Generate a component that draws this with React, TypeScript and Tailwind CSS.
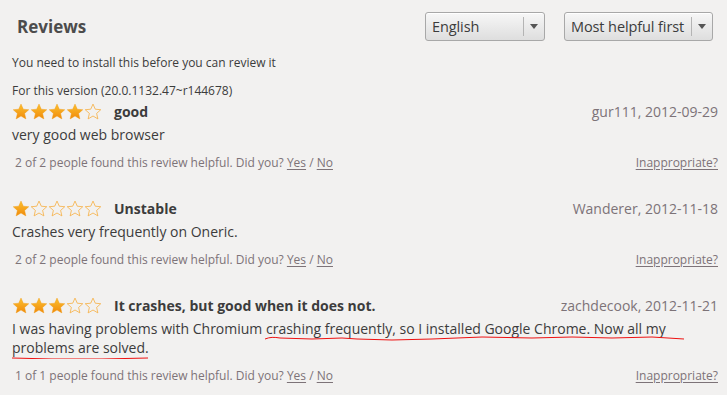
import React from 'react';

type Review = {
  rating: number;
  title: string;
  author: string;
  date: string;
  body: React.ReactNode;
  helpful: string;
};

function Star({ filled }: { filled: boolean }) {
  return (
    <svg width="18" height="17" viewBox="0 0 24 23" className="shrink-0">
      <defs>
        <linearGradient id="starFill" x1="0" y1="0" x2="0" y2="1">
          <stop offset="0" stopColor="#fcc12e" />
          <stop offset="1" stopColor="#f08a0c" />
        </linearGradient>
      </defs>
      <path
        d="M12 1.5l3.1 6.9 7.4.7-5.6 5 1.7 7.4L12 17.6l-6.6 3.9 1.7-7.4-5.6-5 7.4-.7z"
        fill={filled ? 'url(#starFill)' : 'none'}
        stroke={filled ? '#f29b12' : '#f7a934'}
        strokeWidth={filled ? 0.6 : 1}
        strokeLinejoin="miter"
      />
    </svg>
  );
}

function Stars({ rating }: { rating: number }) {
  return (
    <div className="flex items-center">
      {[0, 1, 2, 3, 4].map((i) => (
        <Star key={i} filled={i < rating} />
      ))}
    </div>
  );
}

function Dropdown({ label, width }: { label: string; width: string }) {
  return (
    <div
      className={`${width} h-[29px] flex items-stretch rounded-[3px] border border-[#a8a8a8] bg-gradient-to-b from-[#f7f7f7] to-[#dedede] shadow-[inset_0_1px_0_#ffffff]`}
    >
      <span className="flex-1 flex items-center pl-[6px] text-[14.5px] tracking-[-0.1px] text-[#3c3c3c] whitespace-nowrap">
        {label}
      </span>
      <span className="w-px my-[4px] bg-[#b4b4b4]" />
      <span className="w-[20px] flex items-center justify-center">
        <svg width="8" height="5" viewBox="0 0 8 5">
          <path d="M0 0h8L4 5z" fill="#555" />
        </svg>
      </span>
    </div>
  );
}

function ReviewItem({ r }: { r: Review }) {
  return (
    <div className="flex flex-col">
      <div className="flex items-center justify-between h-[20px]">
        <div className="flex items-center">
          <Stars rating={r.rating} />
          <span className="ml-[12px] text-[14px] font-bold text-[#3c3c3c]">{r.title}</span>
        </div>
        <span className="text-[14px] text-[#7d7378]">
          {r.author}, {r.date}
        </span>
      </div>
      <div className="text-[14px] leading-[19px] text-[#3c3c3c] mt-[4px]">{r.body}</div>
      <div className="flex items-center justify-between mt-[10px] text-[12px] text-[#7d7378]">
        <span className="pl-[3px]">
          {r.helpful} Did you? <span className="underline underline-offset-2">Yes</span> /{' '}
          <span className="underline underline-offset-2">No</span>
        </span>
        <span className="underline underline-offset-2">Inappropriate?</span>
      </div>
    </div>
  );
}

export default function App() {
  const reviews: Review[] = [
    {
      rating: 4,
      title: 'good',
      author: 'gur111',
      date: '2012-09-29',
      body: 'very good web browser',
      helpful: '2 of 2 people found this review helpful.',
    },
    {
      rating: 1,
      title: 'Unstable',
      author: 'Wanderer',
      date: '2012-11-18',
      body: 'Crashes very frequently on Oneric.',
      helpful: '2 of 2 people found this review helpful.',
    },
    {
      rating: 3,
      title: 'It crashes, but good when it does not.',
      author: 'zachdecook',
      date: '2012-11-21',
      body: (
        <span className="relative block">
          I was having problems with Chromium crashing frequently, so I installed Google Chrome. Now all my
          <br />
          problems are solved.
          {/* spell-check style red squiggle drawn over the text */}
          <svg className="absolute left-0 top-0 pointer-events-none" width="700" height="40" viewBox="0 0 700 40">
            <path
              d="M253 20 C258 18 262 18 268 19 L300 20 L330 19 L345 20 L380 21 L420 20 L470 18 L520 19 L560 18 L600 19 L640 18 L672 20"
              fill="none"
              stroke="#ee1111"
              strokeWidth="1"
            />
            <path d="M0 39 L40 40 L90 40 L136 39" fill="none" stroke="#ee1111" strokeWidth="1" />
          </svg>
        </span>
      ),
      helpful: '1 of 1 people found this review helpful.',
    },
  ];

  return (
    <div className="w-[727px] h-[395px] overflow-hidden bg-[#f2f1f0] font-['Open_Sans',sans-serif] px-[12px]">
      <div className="flex items-center justify-between pt-[12px] pr-[2px]">
        <h2 className="pl-[5px] text-[17px] font-bold text-[#4c4c4c]">Reviews</h2>
        <div className="flex items-center gap-[19px]">
          <Dropdown label="English" width="w-[120px]" />
          <Dropdown label="Most helpful first" width="w-[149px]" />
        </div>
      </div>
      <p className="mt-[13px] text-[12px] text-[#3c3c3c]">You need to install this before you can review it</p>
      <p className="mt-[10px] text-[12px] text-[#3c3c3c]">For this version (20.0.1132.47~r144678)</p>
      <div className="flex flex-col gap-[26px] mt-[1px] mr-[-3px]">
        {reviews.map((r) => (
          <ReviewItem key={r.author} r={r} />
        ))}
      </div>
    </div>
  );
}
